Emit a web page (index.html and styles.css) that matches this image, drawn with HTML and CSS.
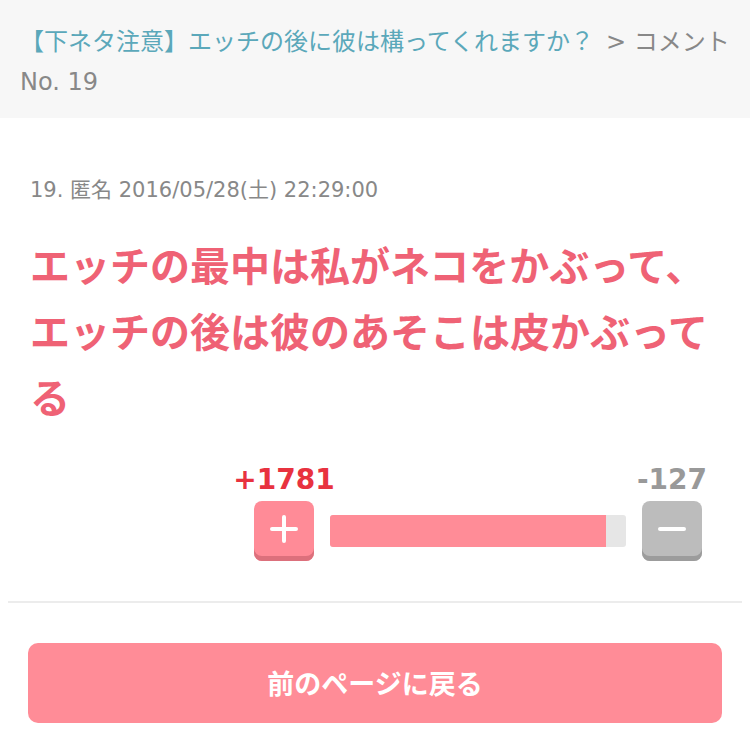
FILE: index.html
```html
<!DOCTYPE html>
<html lang="ja">
<head>
    <meta charset="UTF-8">
    <meta name="viewport" content="width=device-width, initial-scale=1.0">
    <title>コメント No. 19</title>
    <link rel="stylesheet" href="styles.css">
</head>
<body>

<div id="header">
    <a href="#" class="topic-link">【下ネタ注意】エッチの後に彼は構ってくれますか？</a><span class="crumb">&gt; コメント</span> <span>No. 19</span>
</div>

<div id="comment">
    <div class="meta">19. 匿名 2016/05/28(土) 22:29:00</div>
    <div class="body">エッチの最中は私がネコをかぶって、エッチの後は彼のあそこは皮かぶってる</div>

    <div class="vote">
        <div class="count plus-count">+1781</div>
        <div></div>
        <div class="count minus-count">-127</div>

        <button class="vote-btn plus">
            <svg width="30" height="30" viewBox="0 0 30 30"><path d="M15 3v24M3 15h24" stroke="#fff" stroke-width="4" stroke-linecap="round"/></svg>
        </button>
        <div class="bar"><div class="bar-fill" style="width: 93.3%;"></div></div>
        <button class="vote-btn minus">
            <svg width="30" height="30" viewBox="0 0 30 30"><path d="M3 15h24" stroke="#fff" stroke-width="4" stroke-linecap="round"/></svg>
        </button>
    </div>
</div>

<hr class="divider">

<div id="back">
    <a href="#" class="back-btn">前のページに戻る</a>
</div>

</body>
</html>
```

FILE: styles.css
```css
body {
    font-family: "DejaVu Sans", "Noto Sans CJK JP", sans-serif;
    margin: 0;
    background: #fff;
    color: #888;
}
#header {
    background: #f7f7f7;
    padding: 22px 20px 16px;
    font-size: 24px;
    line-height: 40px;
    color: #888;
}
.topic-link {
    color: #5ba8ba;
    text-decoration: none;
}
.crumb {
    margin-left: 12px;
}
#comment {
    padding: 57px 30px 0;
}
.meta {
    font-size: 21px;
    line-height: 30px;
    color: #888;
}
.body {
    margin-top: 26px;
    font-family: "Noto Sans CJK JP", sans-serif;
    font-weight: bold;
    font-size: 40px;
    line-height: 66px;
    color: #ef6275;
}
.vote {
    display: grid;
    grid-template-columns: 60px 1fr 60px;
    column-gap: 16px;
    row-gap: 6px;
    align-items: center;
    width: 448px;
    margin: 36px 18px 0 auto;
}
.count {
    font-weight: bold;
    font-size: 28px;
    line-height: 30px;
    text-align: center;
    white-space: nowrap;
    justify-self: center;
}
.plus-count {
    color: #e8323f;
}
.minus-count {
    color: #999;
}
.vote-btn {
    width: 60px;
    height: 60px;
    border: none;
    border-radius: 8px;
    padding: 0 0 4px;
    display: flex;
    align-items: center;
    justify-content: center;
    cursor: pointer;
}
.vote-btn.plus {
    background: #ff8b97;
    box-shadow: inset 0 -5px 0 #dc707c;
}
.vote-btn.minus {
    background: #bcbcbc;
    box-shadow: inset 0 -5px 0 #9c9c9c;
}
.bar {
    height: 32px;
    background: #e6e6e6;
    border-radius: 3px;
    overflow: hidden;
}
.bar-fill {
    height: 100%;
    background: #ff8c97;
}
.divider {
    border: none;
    border-top: 2px solid #ececec;
    margin: 40px 8px 0;
}
#back {
    padding: 40px 28px 0;
}
.back-btn {
    display: block;
    height: 80px;
    line-height: 80px;
    background: #ff8c97;
    border-radius: 10px;
    color: #fff;
    text-align: center;
    text-decoration: none;
    font-family: "Noto Sans CJK JP", sans-serif;
    font-weight: bold;
    font-size: 27px;
}
```
